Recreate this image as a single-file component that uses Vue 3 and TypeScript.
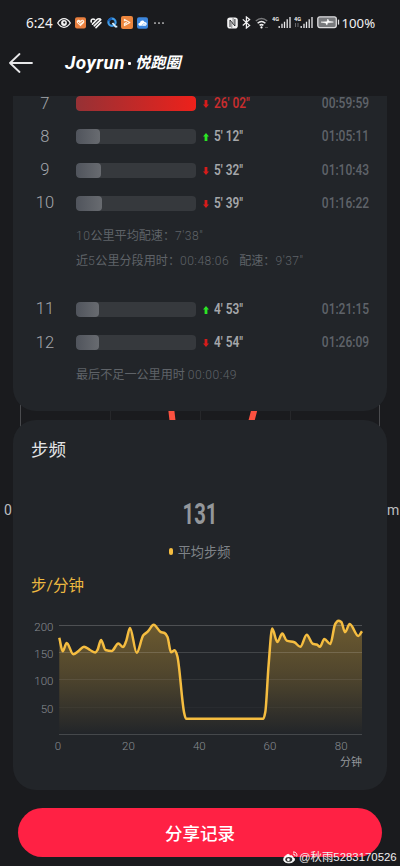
<script setup lang="ts">
interface Split {
  km: number
  fill: number
  pace: string
  trend: 'up' | 'down'
  elapsed: string
  slow?: boolean
}
type Point = [number, number]

const firstSplits: Split[] = [
  { km: 7, fill: 100, pace: '26\' 02"', trend: 'down', elapsed: '00:59:59', slow: true },
  { km: 8, fill: 19.6, pace: '5\' 12"', trend: 'up', elapsed: '01:05:11' },
  { km: 9, fill: 21.2, pace: '5\' 32"', trend: 'down', elapsed: '01:10:43' },
  { km: 10, fill: 22, pace: '5\' 39"', trend: 'down', elapsed: '01:16:22' },
]
const lastSplits: Split[] = [
  { km: 11, fill: 18.8, pace: '4\' 53"', trend: 'up', elapsed: '01:21:15' },
  { km: 12, fill: 18.8, pace: '4\' 54"', trend: 'down', elapsed: '01:26:09' },
]
const groups = [firstSplits, lastSplits]

/* Cadence samples in chart coordinates */
const samples: Point[] = [
  [59.3, 37.7], [62.7, 51.3], [66.7, 43], [73.3, 54.3], [78.5, 51], [84, 46.7], [90, 50],
  [95.3, 52.5], [97.5, 50], [101, 39.9], [105.5, 50], [111.7, 51], [118.3, 43.5], [123, 47],
  [126, 41.5], [130, 28], [136.7, 52.8], [143.3, 35.3], [147.7, 31.7], [153.7, 24.7],
  [160.7, 32], [164.5, 33], [167.5, 37], [171, 52.3], [174.7, 50.3], [177.3, 56], [184, 112], [186, 118.7],
  [263.3, 118.7], [265.3, 112], [268.6, 65], [272.2, 28.6], [277.3, 42], [282.3, 33.5], [286.7, 40.7], [294.3, 42.3],
  [300.3, 46.8], [306.7, 34.8], [312.7, 43.7], [316.7, 44.5], [320, 46.8], [324.3, 39], [330.3, 44],
  [335.2, 24], [338.3, 20.8], [341.3, 22], [345, 32.2], [349.7, 24], [358.3, 36], [362, 31.3],
]

function smooth(pts: Point[]): string {
  const slopes = pts.slice(1).map((p, i) => (p[1] - pts[i][1]) / (p[0] - pts[i][0]))
  const tangents = pts.map((_, i) => {
    const a = slopes[i - 1]
    const b = slopes[i]
    if (a === undefined) return b
    if (b === undefined) return a
    return a * b <= 0 ? 0 : (2 * a * b) / (a + b)
  })
  let d = `M${pts[0][0]} ${pts[0][1]}`
  for (let i = 1; i < pts.length; i++) {
    const [x0, y0] = pts[i - 1]
    const [x1, y1] = pts[i]
    const h = (x1 - x0) / 3
    d += `C${(x0 + h).toFixed(2)} ${(y0 + tangents[i - 1] * h).toFixed(2)} ${(x1 - h).toFixed(2)} ${(y1 - tangents[i] * h).toFixed(2)} ${x1} ${y1}`
  }
  return d
}
const linePath = smooth(samples)
const areaPath = `${linePath}V134H59.3Z`

const yTicks = [
  { label: '200', y: 25.5, o: 0.2 },
  { label: '150', y: 52.5, o: 0.15 },
  { label: '100', y: 79.5, o: 0.08 },
  { label: '50', y: 107.5, o: 0.03 },
  { label: '', y: 134.5, o: 0.16 },
]
const xTicks = [
  { label: '0', x: 58 },
  { label: '20', x: 128.5 },
  { label: '40', x: 199.3 },
  { label: '60', x: 270 },
  { label: '80', x: 341.2 },
]
</script>

<template>
  <div class="screen">
    <div class="status">
      <div class="status-left">
        <span class="clock">6:24</span>
        <svg class="eye" width="14" height="12" viewBox="0 0 14 12">
          <path d="M.7 6Q3.4 1.7 7 1.7T13.3 6Q10.6 10.3 7 10.3T.7 6Z" fill="none" stroke="#f4f4f5" stroke-width="1.3" />
          <circle cx="7" cy="6" r="2.9" fill="#f4f4f5" /><circle cx="7.3" cy="5.6" r="1.1" fill="#1b1c1f" />
        </svg>
        <svg class="i-heart" width="11" height="12" viewBox="0 0 11 12">
          <rect y=".3" width="11" height="11.2" rx="2" fill="#e97f3e" />
          <path d="M5.5 9.3 2.2 6C.6 4 3.4 1.4 5.5 3.7 7.6 1.4 10.4 4 8.8 6Z" fill="#fff0df" />
          <path d="m3 5.1 1.7 1.5L8 4" fill="none" stroke="#e97f3e" stroke-width=".9" />
        </svg>
        <svg class="i-health" width="12" height="12" viewBox="0 0 12 12" fill="none" stroke="#f6f6f6" stroke-width="1.6" stroke-linecap="round">
          <path d="M1.3 5C.5 2.8 2.7 1.2 4.4 2.5M2.5 7.1 6.9 2.6Q8.5 1.2 10 2M4.2 8.8 10.8 2.7M6 10.6 10.9 5.6" />
        </svg>
        <svg class="i-q" width="11" height="11" viewBox="0 0 11 11" fill="none" stroke-width="2.2">
          <circle cx="5" cy="5.2" r="3.6" stroke="#3f9be8" />
          <path d="M1.5 4.3A3.6 3.6 0 0 1 5 1.6" stroke="#155db5" /><path d="m5.5 6 3 3.6h1.8" stroke="#d7efff" stroke-width="1.8" />
        </svg>
        <svg class="i-play" width="12" height="13" viewBox="0 0 12 13">
          <rect width="12" height="13" rx="2" fill="#ed863e" />
          <path d="M3.5 5.2V3.5l5.3 3-5.3 3V7.6l2.3-1.2" fill="none" stroke="#fff0df" stroke-width="1.3" stroke-linejoin="round" />
        </svg>
        <svg class="i-cloud" width="11" height="12" viewBox="0 0 11 12">
          <rect y=".3" width="11" height="11.4" rx="2" fill="#3d86dd" />
          <path d="M3.3 8.8C.7 8.8.8 5.7 3 5.7 3.3 2.7 7.2 2.8 7.5 5c2.9-.1 3 3.8.3 3.8Z" fill="#fff" /><path d="M5 8.8c.2-2 2.3-2.6 3.5-1.4" stroke="#91c2f6" fill="none" />
        </svg>
        <svg class="i-dots" width="10" height="4" viewBox="0 0 10 4" fill="#eee"><circle cx="1" cy="2" r=".85" /><circle cx="5" cy="2" r=".85" /><circle cx="9" cy="2" r=".85" /></svg>
      </div>
      <div class="status-right">
        <svg width="11" height="12" viewBox="0 0 11 12">
          <rect x=".2" y=".4" width="10.6" height="11.2" rx="2.8" fill="#f2f2f3" />
          <path d="M3 10V3l4.9 6V2" fill="none" stroke="#1b1c1f" stroke-width=".9" /><path d="M4.8 5.5v5.4M6.1.9v5.6" stroke="#1b1c1f" stroke-width=".5" />
        </svg>
        <svg class="bt" width="9" height="13" viewBox="0 0 9 13" fill="none" stroke="#f2f2f3" stroke-width="1.25">
          <path d="m.8 3.4 6.8 6L4.4 12V1l3.2 2.5-6.8 6" />
        </svg>
        <svg class="wifi" width="14" height="12" viewBox="0 0 14 12" fill="none" stroke="#ededee" stroke-width="1.5">
          <path d="M.8 4q5.7-5 11.4 0" stroke="#77787a" /><path d="M2.6 6.3q3.9-3.6 7.8 0M4.6 8.4q1.9-1.6 3.8 0" />
          <circle cx="6.5" cy="10.4" r="1.1" fill="#fff" stroke="none" /><path d="M10 10.5h3" stroke="#555" stroke-width="1" />
        </svg>
        <svg v-for="n in 2" :key="n" class="signal" width="19" height="13" viewBox="0 0 19 13">
          <text x="0" y="5.2" class="net">4G</text>
          <path v-if="n === 2" d="M1.5 7v4M4 7v4" stroke="#66686c" />
          <path d="M7.2 10v2M10 7.8V12M12.5 5.7V12M15.2 3.3V12M18 1v11" stroke="#e9e9eb" stroke-width="1.3" />
        </svg>
        <svg class="battery" width="23" height="13" viewBox="0 0 23 13">
          <rect x=".8" y=".8" width="18.5" height="10.8" rx="2" fill="#77797c" stroke="#dcdcde" stroke-width="1.3" />
          <path d="M21.5 3.6v5" stroke="#dcdcde" stroke-width="1.3" /><path d="m4 6.1 6-.4.8-2.7 1.1 2.3 4.5.8-5.8.7-.7 2.3-1.1-2.2Z" fill="#fff" stroke="#fff" stroke-width=".5" />
        </svg>
        <span class="percent">100%</span>
      </div>
    </div>

    <header class="header">
      <svg width="24" height="20" viewBox="0 0 24 20" fill="none" stroke="#e7e7e9" stroke-width="1.8" stroke-linecap="round" stroke-linejoin="round">
        <path d="M10.5 1 1 10l9.5 9M1.5 10h21.5" />
      </svg>
      <h1 class="brand"><span class="latin">Joyrun</span><i class="dot" /><span class="han">悦跑圈</span></h1>
    </header>

    <svg class="backdrop" width="400" height="130" viewBox="0 0 400 130">
      <path d="M20.5 0v42M379.5 0v42" stroke="#4a4b4e" />
      <path d="M110.5 0v42M200.5 0v42M290.5 0v42" stroke="#26272a" />
      <path d="m171.3 15 2.4 21M254.3 15l-5 19" stroke="#fb5140" stroke-width="6" />
      <text x="4" y="120">0</text><text x="387" y="120">m</text>
    </svg>

    <main class="content">
      <section class="card splits">
        <template v-for="(group, g) in groups" :key="g">
          <div v-for="s in group" :key="s.km" class="row" :class="{ slow: s.slow }">
            <span class="km">{{ s.km }}</span>
            <div class="track"><div class="fill" :style="{ width: s.fill + '%' }" /></div>
            <svg class="trend" :class="s.trend" width="6" height="8" viewBox="0 0 6 8"><path :d="s.trend === 'up' ? 'M3 0 6 3.6H4.4V8H1.6V3.6H0Z' : 'M3 8 6 4.4H4.4V0H1.6V4.4H0Z'" /></svg>
            <span class="pace"><span class="narrow">{{ s.pace }}</span></span>
            <span class="elapsed"><span class="narrow">{{ s.elapsed }}</span></span>
          </div>
          <div v-if="g === 0" class="notes">
            <p><span><b>10</b>公里平均配速：<b>7'38"</b></span></p>
            <p><span>近<b>5</b>公里分段用时：<b>00:48:06</b></span><span>配速：<b>9'37"</b></span></p>
          </div>
          <div v-else class="notes tail"><p><span>最后不足一公里用时 <b>00:00:49</b></span></p></div>
        </template>
      </section>

      <section class="card cadence">
        <h2>步频</h2>
        <div class="average"><span>131</span></div>
        <div class="legend"><i /><span>平均步频</span></div>
        <h3>步/分钟</h3>
        <svg class="chart" width="374" height="175" viewBox="13 0 374 175">
          <defs>
            <linearGradient id="area" x1="0" y1="20" x2="0" y2="134" gradientUnits="userSpaceOnUse">
              <stop offset="0" stop-color="#f6bc3c" stop-opacity=".36" /><stop offset=".5" stop-color="#f6bc3c" stop-opacity=".21" /><stop offset="1" stop-color="#f6bc3c" stop-opacity="0" />
            </linearGradient>
          </defs>
          <path :d="areaPath" fill="url(#area)" />
          <path v-for="t in yTicks" :key="t.y" :d="`M59 ${t.y}H362`" stroke="#fff" :stroke-opacity="t.o" />
          <path :d="linePath" fill="none" stroke="#f5bd40" stroke-width="2.5" stroke-linejoin="round" />
          <text v-for="t in yTicks" :key="'l' + t.y" x="53.5" :y="t.y + 5.5" text-anchor="end">{{ t.label }}</text>
          <text v-for="t in xTicks" :key="t.x" :x="t.x" y="149.8" text-anchor="middle">{{ t.label }}</text>
          <text x="362" y="165.5" text-anchor="end" class="unit">分钟</text>
        </svg>
      </section>

      <button class="share" type="button">分享记录</button>
    </main>

    <div class="watermark">
      <svg width="15" height="13" viewBox="0 0 15 13" fill="none" stroke="#fff">
        <path d="M5.7 3.4C3.4 3.4.7 6 .7 8.5c0 4.7 10.8 4.2 10.8-.2 0-1.2-1-1.6-1.9-1.9.5-1.7-1.4-2-3.2-1.2.4-1-.1-1.8-.7-1.8Z" fill="#fff" />
        <ellipse cx="5.8" cy="8.4" rx="3.5" ry="2.3" fill="#333" stroke="none" /><circle cx="5.4" cy="8.7" r="1.4" fill="#fff" stroke="none" />
        <path d="M10 1.1c2.7-.5 4.6 1.9 3.7 4.4M10 3.1c1.5-.3 2.3.7 1.9 2" />
      </svg>
      <span>@秋雨5283170526</span>
    </div>
  </div>
</template>

<style>
body { margin: 0; background: #1a1b1e; }
</style>

<style scoped>
* { box-sizing: border-box; }
.screen { position: relative; width: 400px; height: 866px; overflow: hidden; background: #1a1b1e; font-family: Roboto, "Noto Sans CJK SC", sans-serif; color: #999da2; }
svg { display: block; flex: none; }
h1, h2, h3, p { margin: 0; font-weight: 400; }
.status { display: flex; justify-content: space-between; height: 45px; padding: 0 24.5px 0 26px; color: #f1f1f2; font-family: "Noto Sans", sans-serif; }
.status-left, .status-right { display: flex; align-items: center; }
.clock { width: 31px; font-size: 13.5px; line-height: 20px; white-space: nowrap; }
.i-heart { margin-left: 4px; }
.i-health { margin-left: 4px; }
.i-q { margin-left: 5px; }
.i-play { margin-left: 3px; }
.i-cloud { margin-left: 4px; }
.i-dots { margin-left: 6px; }
.bt { margin-left: 4px; }
.wifi { margin-left: 4px; }
.signal { margin-left: 3px; }
.net { font: 700 5.6px Roboto, sans-serif; fill: #eee; }
.battery { margin-left: 4px; }
.percent { width: 34px; margin-left: 2px; font-size: 13.2px; line-height: 20px; white-space: nowrap; }
.header { display: flex; align-items: center; height: 36px; padding-left: 9px; }
.brand { display: flex; align-items: center; height: 26px; margin-left: 32px; color: #fff; font-style: italic; font-weight: 700; }
.latin { width: 63px; font-size: 19px; line-height: 26px; letter-spacing: .45px; }
.dot { width: 3px; height: 3px; margin: 1px 4px 0 0; border-radius: 1px; background: #fff; }
.han { font-size: 15.2px; line-height: 26px; font-weight: 700; }
.backdrop { position: absolute; left: 0; top: 395px; }
.backdrop text { font: 14px Roboto, sans-serif; fill: #bdbec0; }
.content { position: relative; display: flex; flex-direction: column; margin-top: 15px; padding: 0 13px; }
.card { background: #222529; overflow: hidden; }
.splits { height: 315px; padding-top: .1px; border-radius: 0 0 23px 23px; }
.row { display: grid; grid-template-columns: 63px 120px 7px 4px 7px 60px 1fr; align-items: center; height: 33.2px; padding-right: 17.5px; }
.row:first-child { margin-top: -9px; }
.km { padding-left: 1px; text-align: center; font-size: 16.5px; line-height: 14px; font-weight: 300; color: #a4a7ac; letter-spacing: .2px; }
.track { height: 15px; border-radius: 4px; background: #36393d; overflow: hidden; }
.fill { height: 100%; border-radius: 4px; background: linear-gradient(90deg, #50545c, #686b70); }
.slow .fill { background: linear-gradient(90deg, #963135, #ed211b); }
.trend { grid-column: 3 / 6; justify-self: center; margin: 1px 0 0 1px; }
.trend.up { fill: #2be525; }
.trend.down { fill: #d51c1b; }
.pace, .elapsed { height: 12px; margin-top: -1px; line-height: 12px; font-size: 15px; font-weight: 600; white-space: nowrap; }
.pace { color: #a5a7aa; margin-left: -.5px; }
.pace .narrow { transform: scaleX(.79); }
.slow .pace { color: #c82d2e; }
.narrow { display: inline-block; line-height: 12px; vertical-align: top; transform: scaleX(.8); transform-origin: left center; }
.elapsed { color: #5f6369; text-align: right; font-weight: 500; }
.elapsed .narrow { transform-origin: right center; }
.notes { height: 73px; padding: 4.5px 0 0 63px; color: #5f6368; font-size: 12.1px; font-weight: 300; line-height: 25px; }
.notes b { font-weight: 300; letter-spacing: .48px; }
.notes p { display: flex; gap: 10px; white-space: nowrap; }
.tail { padding-top: 4px; }
.cadence { height: 370px; margin-top: 9px; border-radius: 23px; padding-top: 18px; }
.cadence h2 { padding-left: 18px; font-size: 17.5px; line-height: 25px; color: #e4e5e7; }
.average { height: 36px; margin-top: 33px; display: flex; justify-content: center; align-items: center; color: #94979b; font-size: 29px; font-weight: 700; line-height: 36px; }
.average span { transform: scaleX(.7); }
.legend { display: flex; align-items: center; justify-content: center; gap: 5px; height: 20px; margin: 9px 1px 0 0; font-size: 13.2px; color: #7f8388; }
.legend i { width: 4px; height: 7px; border-radius: 2px; background: #f5bd40; }
.cadence h3 { height: 24px; margin-top: 14px; padding-left: 18px; font-size: 15.5px; line-height: 22px; color: #edb941; }
.chart { margin-top: 1px; }
.chart text { font: 300 11.5px Roboto, "Noto Sans CJK SC", sans-serif; fill: #898d92; }
.chart .unit { font-size: 11px; font-weight: 400; fill: #96999d; }
.share { align-self: center; width: 364px; height: 49px; margin-top: 18px; padding: 0; border: 0; border-radius: 25px; background: #ff2144; color: #fff; font: 500 17.5px "Noto Sans CJK SC", sans-serif; }
.watermark { position: absolute; left: 283px; top: 849px; display: flex; align-items: center; gap: 1px; height: 16px; color: #f0eef0; font: 11.4px/16px "Liberation Sans", "Noto Sans CJK SC", sans-serif; white-space: nowrap; }
</style>
